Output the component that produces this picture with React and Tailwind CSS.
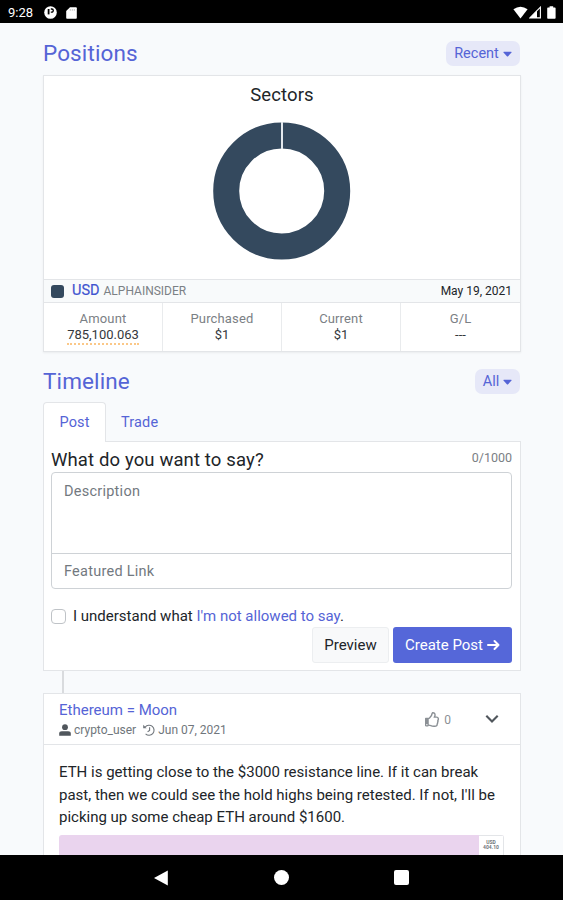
import React from "react";
import { FaRegThumbsUp, FaCaretDown } from "react-icons/fa";

function StatusBar() {
  return (
    <header className="flex h-[23px] shrink-0 items-center bg-black pl-[8px] pr-[7px] pt-[2px] text-white">
      <span className="w-[36px] whitespace-nowrap text-[13px] leading-[16px]">9:28</span>
      <svg className="h-[13px] w-[13px]" viewBox="0 0 13 13">
        <circle cx="6.5" cy="6.5" r="6.3" fill="#fff" />
        <path d="M4.6 3v5.4" fill="none" stroke="#000" strokeWidth="1.8" />
        <path d="M6.8 3h.9a1.6 1.6 0 0 1 0 3.2H6.8" fill="none" stroke="#000" strokeWidth="1.3" />
      </svg>
      <svg className="ml-[9px] h-[12px] w-[11px]" viewBox="0 0 11 12">
        <path d="M4 .3h6q.8 0 .8.9v9.6q0 .9-.8.9H1q-.8 0-.8-.9V4z" fill="#fff" />
        <path d="M4.3 2v1.8M6.3 2v1.8M8.3 2v1.8" stroke="#aaa" strokeWidth=".7" />
      </svg>
      <div className="ml-auto flex items-center">
        <svg className="h-[13px] w-[15px]" viewBox="0 0 15 13">
          <path d="M.4 3.2Q7.5-1.8 14.6 3.2L7.5 12.4z" fill="#fff" />
        </svg>
        <svg className="ml-[1px] h-[13px] w-[12px]" viewBox="0 0 12 13">
          <path d="M11.4 1.2v10.7H.9z" fill="none" stroke="#fff" strokeWidth="1.1" />
          <path d="M8 4.6v7.3H.9z" fill="#fff" />
        </svg>
        <svg className="ml-[6px] h-[13px] w-[9px]" viewBox="0 0 9 13">
          <path d="M2.6.3h3.6v1.2h1.6q.8 0 .8.8v9.6q0 .8-.8.8H1q-.8 0-.8-.8V2.3q0-.8.8-.8h1.6z" fill="#fff" />
        </svg>
      </div>
    </header>
  );
}

function SectionHead({ title, filter, width }) {
  return (
    <div className="flex items-center justify-between">
      <h2 className="text-[22.5px] leading-[27px] tracking-[0.12px] text-[#5564d6]">{title}</h2>
      <button className={`mr-px flex h-[25px] items-center justify-center gap-[4px] rounded-[7px] bg-[#e6e8f8] text-[14.5px] leading-[20px] text-[#5564d6] ${width}`}>
        <span className="pt-px">{filter}</span>
        <FaCaretDown className="h-[15px] w-[9px]" preserveAspectRatio="none" />
      </button>
    </div>
  );
}

function Donut() {
  return (
    <svg className="mx-auto mt-[16px] block h-[138px] w-[138px]" viewBox="0 0 138 138">
      <circle cx="68.7" cy="69" r="55.5" fill="none" stroke="#34495e" strokeWidth="26" />
      <path d="M69 0v27" stroke="#e4e9ee" strokeWidth="2" />
    </svg>
  );
}

function Stat({ label, children, last }) {
  return (
    <div className={`flex flex-col items-center pt-[7px] ${last ? "" : "border-r border-[#e9ebed]"}`}>
      <span className="text-[13px] leading-[17px] tracking-[0.15px] text-[#7b8085]">{label}</span>
      <span className="text-[13px] leading-[16px] text-[#34383c]">{children}</span>
    </div>
  );
}

function Positions() {
  return (
    <section>
      <SectionHead title="Positions" filter="Recent" width="w-[74px]" />
      <div className="mt-[8px] h-[277px] border border-[#e3e5e8] bg-white shadow-[0_1px_2px_rgba(0,0,0,0.06)]">
        <div className="h-[203px] pt-[8px]">
          <h3 className="text-center text-[18.5px] leading-[22px] tracking-[0.1px] text-[#212529]">Sectors</h3>
          <Donut />
        </div>
        <div className="flex h-[24px] items-center border-y border-[#e3e5e8] bg-[#f8fafb] pl-[7px] pr-[8px]">
          <span className="h-[13px] w-[13px] rounded-[3px] bg-[#34495e]" />
          <span className="ml-[8px] text-[14.5px] leading-[20px] text-[#3f54d0] [-webkit-text-stroke:0.2px]">USD</span>
          <span className="ml-[4px] text-[12px] leading-[20px] text-[#7b8085]">ALPHAINSIDER</span>
          <span className="ml-auto text-[12px] leading-[20px] text-[#212529]">May 19, 2021</span>
        </div>
        <div className="grid h-[48px] grid-cols-4">
          <Stat label="Amount">
            <span className="inline-block border-b-2 border-dotted border-[#fbc888] leading-[16px]">785,100.063</span>
          </Stat>
          <Stat label="Purchased">$1</Stat>
          <Stat label="Current">$1</Stat>
          <Stat label="G/L" last>---</Stat>
        </div>
      </div>
    </section>
  );
}

function Composer() {
  return (
    <div>
      <nav className="flex h-[39px] text-[14.5px] leading-[20px] tracking-[0.15px] text-[#5564d6]">
        <span className="relative z-10 -mb-px h-[40px] w-[63px] rounded-t-[4px] border border-b-0 border-[#e3e5e8] bg-white pt-[10px] text-center">Post</span>
        <span className="ml-[15px] pt-[11px]">Trade</span>
      </nav>
      <div className="h-[230px] border border-[#e3e5e8] bg-white pl-[7px] pr-[8px] pt-[6px]">
        <div className="flex h-[24px] justify-between">
          <span className="pt-px text-[18.5px] leading-[23px] tracking-[0.13px] text-[#212529]">What do you want to say?</span>
          <span className="text-[12.5px] leading-[19px] text-[#7b8085]">0/1000</span>
        </div>
        <div className="h-[117px] rounded-[4px] border-[1.5px] border-[#ced2d6] text-[14.5px] leading-[20px] tracking-[0.25px] text-[#73797f]">
          <div className="h-[81px] border-b border-[#ced2d6] pl-[12px] pt-[9px]">Description</div>
          <div className="pl-[12px] pt-[8px]">Featured Link</div>
        </div>
        <div className="mt-[17px] flex h-[20px] items-center">
          <span className="h-[15px] w-[15px] rounded-[4px] border border-[#bfc3c7]" />
          <span className="ml-[7px] whitespace-nowrap pb-px text-[15px] leading-[20px] text-[#212529]">
            I understand what <span className="text-[#5564d6]">I'm not allowed to say</span>.
          </span>
        </div>
        <div className="mt-[1px] flex justify-end gap-[4px] text-[15px] leading-[20px]">
          <button className="h-[36px] w-[77px] rounded-[3px] border border-[#eceef0] bg-[#f8f9fa] text-[#212529]">Preview</button>
          <button className="flex h-[36px] w-[119px] items-center justify-center gap-[4px] rounded-[3px] bg-[#5567d9] text-white">
            Create Post
            <svg className="h-[12px] w-[13px]" viewBox="0 0 13 12">
              <path d="M1 6h10.5M7.5 2l4 4-4 4" fill="none" stroke="#fff" strokeWidth="2" strokeLinecap="round" strokeLinejoin="round" />
            </svg>
          </button>
        </div>
      </div>
    </div>
  );
}

function TimelinePost() {
  return (
    <article className="border border-[#e3e5e8] bg-white">
      <div className="flex h-[51px] border-b border-[#e3e5e8] pl-[15px]">
        <div className="pt-[7px]">
          <div className="text-[15px] leading-[19px] text-[#5564d6]">Ethereum = Moon</div>
          <div className="flex items-center whitespace-nowrap text-[12px] leading-[20px] text-[#70767c]">
            <svg className="h-[12px] w-[12px]" viewBox="0 0 12 12" fill="#50565c">
              <circle cx="6" cy="3.2" r="2.9" />
              <path d="M.2 11.7V9.5Q.2 7.2 2.8 7.2h6.4q2.6 0 2.6 2.3v2.2z" />
            </svg>
            <span className="ml-[3px]">crypto_user</span>
            <svg className="ml-[7px] h-[12px] w-[12px]" viewBox="0 0 12 12" fill="none" stroke="#70767c" strokeWidth="1.1">
              <path d="M2.2 3A5 5 0 1 1 2.6 9.8" />
              <path d="M6.6 3.2v3.2L4.6 7.7" />
              <path d="M.2.8v3.4h3.4z" fill="#70767c" stroke="none" />
            </svg>
            <span className="ml-[3px]">Jun 07, 2021</span>
          </div>
        </div>
        <div className="ml-auto flex items-center pr-[21px] text-[#8b9095]">
          <FaRegThumbsUp className="h-[15px] w-[15px]" />
          <span className="ml-[4px] pt-px text-[12px]">0</span>
          <svg className="ml-[34px] h-[10px] w-[14px]" viewBox="0 0 14 10">
            <path d="M1.3 1.8 7 7.5l5.7-5.7" fill="none" stroke="#50565c" strokeWidth="2.1" />
          </svg>
        </div>
      </div>
      <div className="pl-[15px] pr-[16px] pt-[16px]">
        <p className="whitespace-nowrap text-[15px] leading-[22.5px] text-[#212529]">
          ETH is getting close to the $3000 resistance line. If it can break<br />
          past, then we could see the hold highs being retested. If not, I'll be<br />
          picking up some cheap ETH around $1600.
        </p>
        <div className="mt-[6px] flex h-[60px] overflow-hidden rounded-t-[3px] bg-[#ead4ee]">
          <div className="ml-auto w-[25px] border-r border-t border-[#e3e5e8] bg-white pt-[4px] text-center text-[5px] font-bold leading-[5px] text-[#70757a]">
            USD<br />404.10
          </div>
        </div>
      </div>
    </article>
  );
}

function AndroidNav() {
  return (
    <footer className="flex h-[45px] shrink-0 items-center justify-center gap-[105px] bg-black">
      <svg className="h-[16px] w-[15px]" viewBox="0 0 15 16"><path d="M13.8.5v15L0 8z" fill="#fff" /></svg>
      <span className="h-[15px] w-[15px] rounded-full bg-white" />
      <span className="h-[15px] w-[15px] rounded-[2px] bg-white" />
    </footer>
  );
}

export default function App() {
  return (
    <div className="flex h-[900px] w-[563px] flex-col overflow-hidden bg-[#f8fafc] font-['Roboto',sans-serif]">
      <StatusBar />
      <main className="min-h-0 flex-1 overflow-hidden pl-[43px] pr-[42px] pt-[17px]">
        <Positions />
        <section className="mt-[16px]">
          <SectionHead title="Timeline" filter="All" width="w-[45px]" />
          <div className="mt-[7px]">
            <Composer />
          </div>
          <div className="ml-[19px] h-[22px] w-[2px] bg-[#d9dbde]" />
          <TimelinePost />
        </section>
      </main>
      <AndroidNav />
    </div>
  );
}
